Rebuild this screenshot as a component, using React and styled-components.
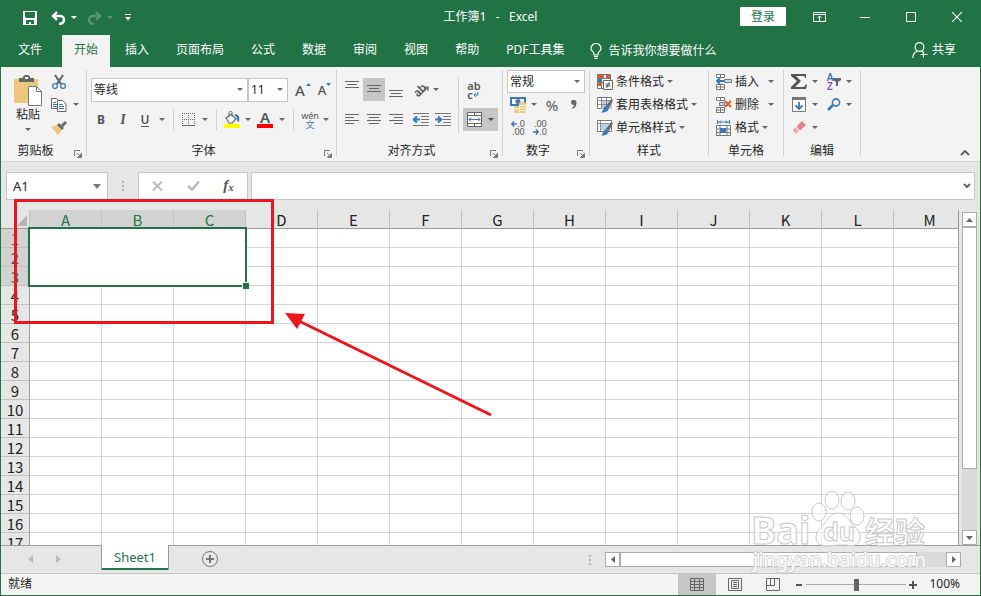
import { useState } from "react";
import styled, { createGlobalStyle, css } from "styled-components";

const columns = ["A", "B", "C", "D", "E", "F", "G", "H", "I", "J", "K", "L", "M"];
const rows = Array.from({ length: 17 }, (_, i) => i + 1);
const tabs = ["文件", "开始", "插入", "页面布局", "公式", "数据", "审阅", "视图", "帮助", "PDF工具集"];

const Caret = ({ color = "#666" }) => (
    <svg width="6" height="3" viewBox="0 0 6 3" fill={color}>
        <path d="M0 0h6L3 3z" />
    </svg>
);

const Tool = ({ label, w, h, active, children }) => (
    <ToolButton type="button" aria-label={label} $w={w} $h={h} $active={active}>
        {children}
    </ToolButton>
);

const Drop = ({ label, w = 12 }) => (
    <Tool label={`${label}选项`} w={w}>
        <Caret />
    </Tool>
);

const Combo = ({ label, value, width, height }) => (
    <ComboBox $w={width} $h={height}>
        <select aria-label={label} defaultValue={value}>
            <option>{value}</option>
        </select>
        <Caret />
    </ComboBox>
);

const Lines = ({ top, xs }) => (
    <svg width="14" height="17" viewBox="0 0 14 17" stroke="#666" shapeRendering="crispEdges">
        {xs.map(([a, b], i) => (
            <path key={i} d={`M${a} ${top + i * 3 + 0.5}H${b}`} />
        ))}
    </svg>
);

const Indent = ({ right }) => (
    <svg width="16" height="14" viewBox="0 0 16 14">
        <path d="M0 .5h16M8 3.5h8M8 6.5h8M8 9.5h8M0 12.5h16" stroke="#777" />
        <path
            d={right ? "M0 6.5h6M3 3.5l3.5 3L3 9.5" : "M7 6.5H1M4 3.5l-3.5 3L4 9.5"}
            stroke="#3b78b8"
            strokeWidth="2"
            fill="none"
        />
    </svg>
);

const GroupFooter = ({ title, launcher }) => (
    <Footer>
        <span>{title}</span>
        {launcher && (
            <button type="button" aria-label={`${title}设置`}>
                <svg width="8" height="8" viewBox="0 0 8 8" fill="none" stroke="#777">
                    <path d="M.5 6V.5H6M3 3l4 4" />
                    <path d="M7.5 3.5v4h-4z" fill="#777" />
                </svg>
            </button>
        )}
    </Footer>
);

const TitleBar = () => (
    <Title>
        <QuickAccess>
            <BarButton type="button" aria-label="保存" $w={22}>
                <svg width="14" height="14" viewBox="0 0 14 14">
                    <path
                        fill="#fff"
                        fillRule="evenodd"
                        d="M0 0h14v14H0zM2 1v5l1 1h8l1-1V1zM3 9v4h3v-2h2v2h3V9z"
                    />
                </svg>
            </BarButton>
            <BarButton type="button" aria-label="撤消" $w={35}>
                <svg width="15" height="14" viewBox="0 0 15 14" fill="none" stroke="#fff" strokeWidth="2.4">
                    <path d="M6 1L2 5l4 4M2 5h7c5 0 6 7-1 8" />
                </svg>
                <Caret color="#fff" />
            </BarButton>
            <BarButton type="button" aria-label="恢复" disabled $w={35}>
                <svg width="15" height="14" viewBox="0 0 15 14" fill="none" stroke="#569474" strokeWidth="2.4">
                    <path d="M9 1l4 4-4 4M13 5H6C1 5 0 12 7 13" />
                </svg>
                <Caret color="#569474" />
            </BarButton>
            <BarButton type="button" aria-label="自定义快速访问工具栏" $w={20}>
                <svg width="6" height="7" viewBox="0 0 6 7" fill="#fff">
                    <path d="M0 0h6v1H0zM0 3h6L3 6.5z" />
                </svg>
            </BarButton>
        </QuickAccess>
        <h1>工作簿1&nbsp;&nbsp; -&nbsp;&nbsp; Excel</h1>
        <WindowTools>
            <Login type="button">登录</Login>
            <BarButton type="button" aria-label="功能区显示选项" $w={46}>
                <svg width="13" height="10" viewBox="0 0 13 10" fill="none" stroke="#fff">
                    <path d="M.5.5h12v9H.5zM.5 2.5h12M6.5 9V4M4.5 6l2-2 2 2" />
                </svg>
            </BarButton>
            <BarButton type="button" aria-label="最小化" $w={46}>
                <svg width="10" height="10" viewBox="0 0 10 10" stroke="#fff">
                    <path d="M0 5.5h10" />
                </svg>
            </BarButton>
            <BarButton type="button" aria-label="最大化" $w={46}>
                <svg width="10" height="10" viewBox="0 0 10 10" fill="none" stroke="#fff">
                    <path d="M.5.5h9v9h-9z" />
                </svg>
            </BarButton>
            <BarButton type="button" aria-label="关闭" $w={46}>
                <svg width="10" height="10" viewBox="0 0 10 10" stroke="#fff" strokeWidth="1.2">
                    <path d="M0 0l10 10M10 0L0 10" />
                </svg>
            </BarButton>
        </WindowTools>
    </Title>
);

const TabBar = () => {
    const [active, setActive] = useState("开始");

    return (
        <Tabs>
            {tabs.map((tab, i) => (
                <Tab
                    key={tab}
                    type="button"
                    $wide={i === 0}
                    $active={active === tab}
                    onClick={() => setActive(tab)}
                >
                    {tab}
                </Tab>
            ))}
            <Search type="button">
                <svg width="12" height="16" viewBox="0 0 12 16" fill="none" stroke="#fff" strokeWidth="1.2">
                    <path d="M4 12v-1.5C3.5 8.500 1 8 1 5.5a5 5 0 0 1 10 0C11 8 8.500 8.500 8 10.5V12zM4 13.5h4M4.5 15.4h3" />
                </svg>
                告诉我你想要做什么
            </Search>
            <Share type="button">
                <svg width="16" height="16" viewBox="0 0 16 16" fill="none" stroke="#fff" strokeWidth="1.2">
                    <circle cx="7.5" cy="5" r="4.4" />
                    <path d="M.8 16c0-4 2-6 4.700-7M9.500 9l1.500 1M11.5 9.500v6M8.5 12.5h7" />
                </svg>
                共享
            </Share>
        </Tabs>
    );
};

const ClipboardGroup = () => (
    <Group $w={86}>
        <Content $pad="0 0 0 8px">
            <Paste type="button">
                <svg width="28" height="31" viewBox="0 0 28 31">
                    <path d="M0 4h24v24H0z" fill="#edc77e" />
                    <path d="M5 3h4V1.500L11 0h3l2 1.500V3h4v4H5z" fill="#666" />
                    <path d="M11 2h3v2h-3z" fill="#f3f3f3" />
                    <path d="M14.5 11.5h8l5 5v14h-13z" fill="#fff" stroke="#777" />
                    <path d="M22.5 11.5v5h5" fill="none" stroke="#777" />
                </svg>
                粘贴
                <Caret />
            </Paste>
            <Stack>
                <Line>
                    <Tool label="剪切" w={24}>
                        <svg width="14" height="16" viewBox="0 0 14 16" fill="none">
                            <path d="M3 1l6 9M11 1L5 10" stroke="#666" strokeWidth="2.2" />
                            <circle cx="3" cy="12" r="2.4" stroke="#3b78b8" strokeWidth="1.3" />
                            <circle cx="11" cy="12" r="2.4" stroke="#3b78b8" strokeWidth="1.3" />
                        </svg>
                    </Tool>
                </Line>
                <Line>
                    <Tool label="复制" w={24}>
                        <svg width="16" height="14" viewBox="0 0 16 14" fill="#fff" stroke="#666">
                            <path d="M.5.5h5l3 3v7h-8z" />
                            <path d="M2 4.5h3M2 6.5h4M2 8.5h4" stroke="#3b78b8" />
                            <path d="M6.5 2.5h5l3.500 3.500v7.5H6.500z" />
                            <path d="M8 6.5h4M8 8.5h5M8 10.5h5" stroke="#3b78b8" />
                        </svg>
                    </Tool>
                    <Drop label="复制" w={10} />
                </Line>
                <Line>
                    <Tool label="格式刷" w={24}>
                        <svg width="16" height="14" viewBox="0 0 16 14">
                            <path d="M0 6l6-2 5 5-4 5z" fill="#edc77e" />
                            <path d="M6 4l2-2 5 5-2 2z" fill="#666" />
                            <path d="M10 4l4-4 2 2-4 4z" fill="#666" />
                        </svg>
                    </Tool>
                </Line>
            </Stack>
        </Content>
        <GroupFooter title="剪贴板" launcher />
    </Group>
);

const FontGroup = () => (
    <Group $w={250}>
        <Content $pad="8px 0 0 3px">
            <Stack $gap={7}>
                <Line $pad={1}>
                    <Combo label="字体" value="等线" width={157} height={24} />
                    <Combo label="字号" value="11" width={40} height={24} />
                    <Tool label="增大字号" w={24}>
                        <Letter $size={15}>A</Letter>
                        <Corner width="5" height="3" viewBox="0 0 5 3">
                            <path d="M0 3h5L2.500 0z" />
                        </Corner>
                    </Tool>
                    <Tool label="减小字号" w={20}>
                        <Letter $size={13}>A</Letter>
                        <Corner width="5" height="3" viewBox="0 0 5 3">
                            <path d="M0 0h5L2.500 3z" />
                        </Corner>
                    </Tool>
                </Line>
                <Line>
                    <Tool label="加粗"><b>B</b></Tool>
                    <Tool label="倾斜"><Italic>I</Italic></Tool>
                    <Tool label="下划线"><Underline>U</Underline></Tool>
                    <Drop label="下划线" />
                    <Rule />
                    <Tool label="边框" w={20}>
                        <svg width="14" height="14" viewBox="0 0 14 14" stroke="#666">
                            <path
                                d="M0 .5h13M0 6.5h13M.5 0v12M6.5 0v12M12.5 0v12"
                                strokeDasharray="1 1"
                                shapeRendering="crispEdges"
                            />
                            <path d="M0 12.5h13" />
                        </svg>
                    </Tool>
                    <Drop label="边框" />
                    <Rule />
                    <Tool label="填充颜色" w={20}>
                        <svg width="16" height="17" viewBox="0 0 16 17">
                            <path d="M2 7l5-4 5 5-4 4H5z" fill="#fff" stroke="#666" strokeWidth="1.2" />
                            <path d="M5 6V1.500C5 0 8 0 8 1.500V6" fill="none" stroke="#666" />
                            <path d="M10 3c5 0 6 3 5 8l-2-1c0-2 0-3-1-4z" fill="#3b78b8" />
                            <path d="M0 13h16v4H0z" fill="#ff0" />
                        </svg>
                    </Tool>
                    <Drop label="填充颜色" />
                    <Tool label="字体颜色">
                        <FontColor>A</FontColor>
                    </Tool>
                    <Drop label="字体颜色" />
                    <Rule />
                    <Tool label="拼音">
                        <Pinyin>
                            wén<span>文</span>
                        </Pinyin>
                    </Tool>
                    <Drop label="拼音" w={10} />
                </Line>
            </Stack>
        </Content>
        <GroupFooter title="字体" launcher />
    </Group>
);

const AlignGroup = () => (
    <Group $w={166}>
        <Content $pad="8px 0 0 4px">
            <Stack $gap={7}>
                <Line $gap={3}>
                    <Line>
                        <Tool label="顶端对齐"><Lines top={0} xs={[[0, 14], [2, 12], [0, 14]]} /></Tool>
                        <Tool label="垂直居中" h={23} active><Lines top={4} xs={[[0, 14], [2, 12], [0, 14]]} /></Tool>
                        <Tool label="底端对齐"><Lines top={9} xs={[[0, 14], [2, 12], [0, 14]]} /></Tool>
                    </Line>
                    <Line>
                        <Tool label="方向">
                            <Slanted>ab</Slanted>
                            <svg width="10" height="14" viewBox="0 0 10 14" stroke="#666" strokeWidth="1.2" fill="none">
                                <path d="M0 13l9-9M5 4h4v4" />
                            </svg>
                        </Tool>
                        <Drop label="方向" w={8} />
                    </Line>
                </Line>
                <Line $gap={3}>
                    <Line>
                        <Tool label="左对齐"><Lines top={3} xs={[[0, 14], [0, 9], [0, 14], [0, 9]]} /></Tool>
                        <Tool label="居中"><Lines top={3} xs={[[0, 14], [2, 12], [0, 14], [2, 12]]} /></Tool>
                        <Tool label="右对齐"><Lines top={3} xs={[[0, 14], [5, 14], [0, 14], [5, 14]]} /></Tool>
                    </Line>
                    <Line>
                        <Tool label="减少缩进量"><Indent /></Tool>
                        <Tool label="增加缩进量"><Indent right /></Tool>
                    </Line>
                </Line>
            </Stack>
            <Rule $tall />
            <Stack $gap={7}>
                <Line>
                    <Tool label="自动换行">
                        <Wrap>
                            ab
                            <span>
                                c
                                <svg width="6" height="5" viewBox="0 0 6 5" stroke="#3b78b8" fill="none">
                                    <path d="M5 0v3H1M3 1L1 3l2 2" />
                                </svg>
                            </span>
                        </Wrap>
                    </Tool>
                </Line>
                <Line>
                    <Tool label="合并后居中" w={35} h={23} active>
                        <svg width="15" height="15" viewBox="0 0 15 15">
                            <path d="M.5.5h14v14H.5zM.5 3.5h14M.5 11.5h14M7.5 0v3M7.5 12v3" fill="#fff" stroke="#666" />
                            <path d="M2 7.5h11M4 5.5l-2 2 2 2M11 5.5l2 2-2 2" fill="none" stroke="#3b78b8" />
                        </svg>
                        <Caret color="#444" />
                    </Tool>
                </Line>
            </Stack>
        </Content>
        <GroupFooter title="对齐方式" launcher />
    </Group>
);

const NumberGroup = () => (
    <Group $w={87}>
        <Content $pad="0 0 0 4px">
            <Stack>
                <Line>
                    <Combo label="数字格式" value="常规" width={78} height={23} />
                </Line>
                <Line>
                    <Tool label="会计数字格式">
                        <svg width="17" height="16" viewBox="0 0 17 16">
                            <path d="M0 0h16v9H0z" fill="#3b78b8" />
                            <path d="M2 2h12v5H2z" fill="#fff" />
                            <circle cx="8" cy="4.5" r="2.5" fill="#3b78b8" />
                            <rect x="9" y="5" width="7" height="11" rx="2" fill="#edc77e" />
                            <rect x="4" y="9" width="6" height="7" rx="2" fill="#edc77e" />
                            <path d="M9 8.500h7M9 11h7M9 13.500h7M4 12h5M9.500 9v6" stroke="#fff" strokeWidth=".8" />
                        </svg>
                    </Tool>
                    <Drop label="会计数字格式" w={10} />
                    <Tool label="百分比" w={26}><Percent>%</Percent></Tool>
                    <Tool label="千位分隔样式" w={18}>
                        <svg width="6" height="9" viewBox="0 0 6 9" fill="#666">
                            <path d="M0 2.500a2.500 2.500 0 0 1 5.500 0C5.500 6 4 8 1.500 9l-.5-1c1.500-1 2-2 2-3C1 5 0 4 0 2.500z" />
                        </svg>
                    </Tool>
                </Line>
                <Line>
                    <Tool label="增加小数位数">
                        <Decimals>
                            <span>
                                <svg width="6" height="6" viewBox="0 0 6 6" stroke="#3b78b8" strokeWidth="1.5" fill="none">
                                    <path d="M6 3H1M3 .5L.8 3 3 5.500" />
                                </svg>
                                .0
                            </span>
                            <span>.00</span>
                        </Decimals>
                    </Tool>
                    <Tool label="减少小数位数">
                        <Decimals>
                            <span>.00</span>
                            <span>
                                <svg width="6" height="6" viewBox="0 0 6 6" stroke="#3b78b8" strokeWidth="1.5" fill="none">
                                    <path d="M0 3h5M3 .5L5.200 3 3 5.500" />
                                </svg>
                                .0
                            </span>
                        </Decimals>
                    </Tool>
                </Line>
            </Stack>
        </Content>
        <GroupFooter title="数字" launcher />
    </Group>
);

const TableBrush = ({ cell }) => (
    <svg width="16" height="16" viewBox="0 0 16 16">
        <path d="M.5.5h14v11H.5z" fill="#fff" stroke="#777" />
        <path d={cell ? "M4 4h8v6H4z" : "M4 4h11v8H4z"} fill="#b7cfe8" />
        {cell ? (
            <path d="M.5 3.5h14M3.5.5v11" stroke="#777" fill="none" strokeWidth=".8" />
        ) : (
            <path d="M.5 3.5h14M4.5.5v11M.5 7.5h14M9.5.5v11" stroke="#777" fill="none" strokeWidth=".8" />
        )}
        <path d="M14.500 2L16 3l-4 8-3-2z" fill="#666" />
        <path d="M8.500 9l3.500 2c-1 4-4 5-8 4.500 2-1 2-5 4.500-6.500z" fill="#3b78b8" />
    </svg>
);

const StylesGroup = () => (
    <Group $w={119}>
        <Content $pad="0 0 0 7px">
            <Stack>
                <TextTool type="button">
                    <svg width="16" height="16" viewBox="0 0 16 16">
                        <path d="M.5.5h13v14H.5zM4.5.5v14M.5 4.5h13M.5 8.5h13" fill="#fff" stroke="#777" />
                        <path d="M1 1h6v3H1zM9 1h4v3H9zM1 9h4v3H1z" fill="#dc5a32" />
                        <path d="M1 5h4v3H1z" fill="#3b78b8" />
                        <path d="M6.5 6.5h9v9h-9z" fill="#fff" stroke="#666" />
                        <path d="M8.5 10h5M8.5 12h5M12.5 8l-3 6" stroke="#555" />
                    </svg>
                    条件格式
                    <Caret />
                </TextTool>
                <TextTool type="button">
                    <TableBrush />
                    套用表格格式
                    <Caret />
                </TextTool>
                <TextTool type="button">
                    <TableBrush cell />
                    单元格样式
                    <Caret />
                </TextTool>
            </Stack>
        </Content>
        <GroupFooter title="样式" />
    </Group>
);

const CellsGroup = () => (
    <Group $w={75}>
        <Content $pad="0 0 0 7px">
            <Stack>
                <Line>
                    <TextTool type="button">
                        <svg width="16" height="16" viewBox="0 0 16 16" fill="#fff" stroke="#777">
                            <path d="M.5.5h8v3h-8zM4.5.5v3M.5 10.5h8v5h-8zM.5 13h8M4.5 10.5v5" />
                            <path d="M8.5 5.5h7v3h-7z" fill="#c5d9ee" />
                            <path d="M8 7H1M4 4L1 7l3 3" stroke="#3b78b8" strokeWidth="2" fill="none" />
                        </svg>
                        插入
                    </TextTool>
                    <Drop label="插入" w={24} />
                </Line>
                <Line>
                    <TextTool type="button">
                        <svg width="16" height="16" viewBox="0 0 16 16" fill="#fff" stroke="#777">
                            <path d="M.5.5h8v3h-8zM4.5.5v3M.5 10.5h8v5h-8zM.5 13h8M4.5 10.5v5" />
                            <path d="M3.5 5.5h5v3h-5z" fill="#c5d9ee" />
                            <path d="M9 4l6 6M15 4l-6 6" stroke="#dc5a32" strokeWidth="2" />
                        </svg>
                        删除
                    </TextTool>
                    <Drop label="删除" w={24} />
                </Line>
                <TextTool type="button">
                    <svg width="16" height="16" viewBox="0 0 16 16" fill="#fff" stroke="#777">
                        <path d="M.5 5.5h14v10H.5zM4 5.5v10M11 5.5v10M.5 9h14M.5 12.5h14" />
                        <path d="M4 8h6v5H4z" fill="#3b78b8" stroke="none" />
                        <path d="M2 2h11M1.5 0v4M13.5 0v4M5 .5L3.500 2 5 3.500M10 .5L11.500 2 10 3.500" stroke="#3b78b8" fill="none" />
                    </svg>
                    格式
                    <Caret />
                </TextTool>
            </Stack>
        </Content>
        <GroupFooter title="单元格" />
    </Group>
);

const EditGroup = () => (
    <Group $w={77}>
        <Content $pad="0 0 0 4px">
            <Stack>
                <Line $gap={4}>
                    <Line>
                        <Tool label="自动求和">
                            <svg width="16" height="15" viewBox="0 0 16 15" fill="#555">
                                <path d="M0 0h15v4h-1c0-1.500-1-2-2-2H5l5 5-6 6h8c1.500 0 2-1 2.500-2.500H16L15 15H0v-2l6-6-6-5z" />
                            </svg>
                        </Tool>
                        <Drop label="自动求和" w={9} />
                    </Line>
                    <Line>
                        <Tool label="排序和筛选">
                            <SortMark>
                                A<span>Z</span>
                            </SortMark>
                            <svg width="8" height="8" viewBox="0 0 8 8" fill="#666">
                                <path d="M0 0h8v2L5 4v4H3V4L0 2z" />
                            </svg>
                        </Tool>
                        <Drop label="排序和筛选" w={8} />
                    </Line>
                </Line>
                <Line $gap={4}>
                    <Line>
                        <Tool label="填充">
                            <svg width="14" height="15" viewBox="0 0 14 15">
                                <path d="M.5.5h13v14H.5z" fill="#fff" stroke="#777" />
                                <path d="M0 0h14v3H0z" fill="#777" />
                                <path d="M7 5v7M3.500 8.500L7 12l3.500-3.500" stroke="#3b78b8" strokeWidth="1.8" fill="none" />
                            </svg>
                        </Tool>
                        <Drop label="填充" w={9} />
                    </Line>
                    <Line>
                        <Tool label="查找和选择">
                            <svg width="14" height="13" viewBox="0 0 14 13" fill="none" stroke="#3b78b8">
                                <circle cx="9" cy="4.5" r="3.6" strokeWidth="1.6" />
                                <path d="M6 7l-5 5" strokeWidth="2.6" />
                            </svg>
                        </Tool>
                        <Drop label="查找和选择" w={8} />
                    </Line>
                </Line>
                <Line>
                    <Tool label="清除">
                        <svg width="13" height="13" viewBox="0 0 13 13">
                            <path d="M0 9l2.500-3L6 10l-2.500 2.500H2z" fill="#f2a9b5" />
                            <path d="M3.500 5.500L9 0l4 4-6 5.500z" fill="#e57f92" />
                        </svg>
                    </Tool>
                    <Drop label="清除" w={9} />
                </Line>
            </Stack>
        </Content>
        <GroupFooter title="编辑" />
    </Group>
);

const FormulaRow = () => (
    <FormulaBar>
        <NameBox>
            <input aria-label="名称框" defaultValue="A1" />
            <svg width="8" height="5" viewBox="0 0 8 5" fill="#777">
                <path d="M0 0h8L4 5z" />
            </svg>
        </NameBox>
        <Dots width="2" height="12" viewBox="0 0 2 12">
            <path d="M0 1h2v2H0zM0 5h2v2H0zM0 9h2v2H0z" />
        </Dots>
        <FormulaTools>
            <Tool label="取消" w={36}>
                <svg width="11" height="10" viewBox="0 0 11 10" stroke="#bbb" strokeWidth="2">
                    <path d="M1 .5l9 9M10 .5l-9 9" />
                </svg>
            </Tool>
            <Tool label="输入" w={36}>
                <svg width="13" height="10" viewBox="0 0 13 10" fill="none" stroke="#bbb" strokeWidth="2.6">
                    <path d="M1 5l4 3.500 7-8" />
                </svg>
            </Tool>
            <Tool label="插入函数" w={35}>
                <Fx>
                    f<sub>x</sub>
                </Fx>
            </Tool>
        </FormulaTools>
        <FormulaInput>
            <input aria-label="编辑栏" />
            <svg width="8" height="6" viewBox="0 0 8 6" fill="none" stroke="#666" strokeWidth="2">
                <path d="M1 1l3 3 3-3" />
            </svg>
        </FormulaInput>
    </FormulaBar>
);

const Sheet = () => (
    <SheetArea>
        <GridPane>
            <Grid>
                <colgroup>
                    <col width="29" />
                    {columns.map((c) => (
                        <col key={c} width="72" />
                    ))}
                </colgroup>
                <thead>
                    <tr>
                        <Head>
                            <svg width="10" height="11" viewBox="0 0 10 11" fill="#b4b4b4">
                                <path d="M10 0v11H0z" />
                            </svg>
                        </Head>
                        {columns.map((c, i) => (
                            <Head key={c} scope="col" $selected={i < 3}>
                                {c}
                            </Head>
                        ))}
                    </tr>
                </thead>
                <tbody>
                    {rows.map((r) => (
                        <tr key={r}>
                            <RowHead scope="row" $selected={r < 4}>
                                {r}
                            </RowHead>
                            {columns.map((c) => (
                                <td key={c} />
                            ))}
                        </tr>
                    ))}
                </tbody>
            </Grid>
            <Selection />
        </GridPane>
        <VerticalScroll>
            <ScrollButton type="button" aria-label="向上滚动">
                <svg width="7" height="4" viewBox="0 0 7 4" fill="#666">
                    <path d="M0 4h7L3.500 0z" />
                </svg>
            </ScrollButton>
            <ScrollTrack>
                <span />
            </ScrollTrack>
            <ScrollButton type="button" aria-label="向下滚动">
                <svg width="7" height="4" viewBox="0 0 7 4" fill="#666">
                    <path d="M0 0h7L3.500 4z" />
                </svg>
            </ScrollButton>
        </VerticalScroll>
    </SheetArea>
);

const SheetTabs = () => (
    <SheetBar>
        <SheetNav>
            <button type="button" aria-label="上一个工作表" disabled>
                <svg width="5" height="8" viewBox="0 0 5 8" fill="#bbb">
                    <path d="M5 0v8L0 4z" />
                </svg>
            </button>
            <button type="button" aria-label="下一个工作表" disabled>
                <svg width="5" height="8" viewBox="0 0 5 8" fill="#bbb">
                    <path d="M0 0v8l5-4z" />
                </svg>
            </button>
        </SheetNav>
        <SheetTab type="button">Sheet1</SheetTab>
        <AddSheet type="button" aria-label="新工作表">
            <svg width="16" height="16" viewBox="0 0 16 16" fill="none" stroke="#777">
                <circle cx="8" cy="8" r="7.5" />
                <path d="M8 4v8M4 8h8" strokeWidth="2" />
            </svg>
        </AddSheet>
        <HorizontalScroll>
            <Dots width="2" height="12" viewBox="0 0 2 12">
                <path d="M0 1h2v2H0zM0 5h2v2H0zM0 9h2v2H0z" />
            </Dots>
            <ScrollButton type="button" aria-label="向左滚动">
                <svg width="4" height="7" viewBox="0 0 4 7" fill="#666">
                    <path d="M4 0v7L0 3.500z" />
                </svg>
            </ScrollButton>
            <ScrollTrack $horizontal>
                <span />
            </ScrollTrack>
            <ScrollButton type="button" aria-label="向右滚动">
                <svg width="4" height="7" viewBox="0 0 4 7" fill="#666">
                    <path d="M0 0v7l4-3.500z" />
                </svg>
            </ScrollButton>
        </HorizontalScroll>
    </SheetBar>
);

const StatusRow = () => {
    const [zoom, setZoom] = useState(100);

    return (
        <StatusBar>
            <span>就绪</span>
            <StatusTools>
                <ViewButton type="button" aria-label="普通" $active>
                    <svg width="14" height="13" viewBox="0 0 14 13" fill="none" stroke="#666">
                        <path d="M.5.5h13v12H.5zM.5 3.5h13M.5 6.5h13M.5 9.5h13M4.5.5v12M9.5.5v12" />
                    </svg>
                </ViewButton>
                <ViewButton type="button" aria-label="页面布局">
                    <svg width="14" height="13" viewBox="0 0 14 13" fill="none" stroke="#666">
                        <path d="M.5.5h13v12H.5zM3.5 2.5h7v8h-7zM5 4.5h4M5 6.5h4M5 8.5h4" />
                    </svg>
                </ViewButton>
                <ViewButton type="button" aria-label="分页预览">
                    <svg width="14" height="13" viewBox="0 0 14 13" fill="none" stroke="#666">
                        <path d="M.5.5h13v12H.5zM4.5.5v7M8.5.5v7M.5 7.5h8" />
                    </svg>
                </ViewButton>
                <ZoomButton type="button" aria-label="缩小" onClick={() => setZoom(Math.max(10, zoom - 10))}>
                    <svg width="6" height="6" viewBox="0 0 6 6" stroke="#555" strokeWidth="2">
                        <path d="M0 3h6" />
                    </svg>
                </ZoomButton>
                <ZoomRange
                    type="range"
                    aria-label="显示比例"
                    min="10"
                    max="190"
                    value={zoom}
                    onChange={(e) => setZoom(Number(e.target.value))}
                />
                <ZoomButton type="button" aria-label="放大" onClick={() => setZoom(Math.min(190, zoom + 10))}>
                    <svg width="8" height="8" viewBox="0 0 8 8" stroke="#555" strokeWidth="2">
                        <path d="M0 4h8M4 0v8" />
                    </svg>
                </ZoomButton>
                <ZoomValue>{zoom}%</ZoomValue>
            </StatusTools>
        </StatusBar>
    );
};

const Watermark = () => (
    <Mark width="180" height="86" viewBox="0 0 180 86">
        <text x="0" y="54" fontSize="38" fontWeight="700">Bai</text>
        <g>
            <ellipse cx="81" cy="10" rx="7" ry="9" />
            <ellipse cx="97" cy="11" rx="7" ry="9" />
            <ellipse cx="68" cy="22" rx="7" ry="9" />
            <ellipse cx="106" cy="26" rx="7" ry="9" />
            <path d="M87 23c7 0 10 6 14 11 4 4 9 8 8 14-1 9-9 8-14 7-5 0-11 0-16 1-6 0-14 0-14-9 0-6 5-9 8-13 4-5 7-11 14-11z" />
        </g>
        <text x="72" y="51" fontSize="25" fontWeight="700">du</text>
        <text x="114" y="53" fontSize="30" fontWeight="700">经验</text>
        <Address x="2" y="77" fontSize="20">jingyan.baidu.com</Address>
    </Mark>
);

const App = () => (
    <>
        <GlobalStyle />
        <Window>
            <TitleBar />
            <TabBar />
            <Ribbon>
                <ClipboardGroup />
                <FontGroup />
                <AlignGroup />
                <NumberGroup />
                <StylesGroup />
                <CellsGroup />
                <EditGroup />
                <Collapse type="button" aria-label="折叠功能区">
                    <svg width="10" height="6" viewBox="0 0 10 6" fill="none" stroke="#666" strokeWidth="2">
                        <path d="M1 5l4-4 4 4" />
                    </svg>
                </Collapse>
            </Ribbon>
            <FormulaRow />
            <Sheet />
            <SheetTabs />
            <StatusRow />
            <Annotation width="480" height="220" viewBox="0 0 480 220">
                <path d="M1.500 1.500h257v122h-257z" fill="none" />
                <path d="M285 122l192 94" />
                <path d="M271 114l20 1-8 15z" fill="#ee141c" stroke="none" />
            </Annotation>
            <Watermark />
        </Window>
    </>
);

export default App;

const GlobalStyle = createGlobalStyle`
    * {
        box-sizing: border-box;
    }

    body {
        margin: 0;
        font: 12px/16px "Noto Sans", "Noto Sans CJK SC", sans-serif;
        color: #262626;
    }

    button,
    input,
    select {
        margin: 0;
        padding: 0;
        border: 0;
        border-radius: 0;
        background: none;
        font: inherit;
        color: inherit;
        outline: none;
    }

    svg {
        display: block;
        flex: none;
    }
`;

const center = css`
    display: flex;
    align-items: center;
    justify-content: center;
`;

const Window = styled.div`
    position: relative;
    display: flex;
    flex-direction: column;
    height: 100vh;
    overflow: hidden;
    border: solid #217346;
    border-width: 0 1px 1px;
    background: #e6e6e6;
`;

const Title = styled.header`
    display: grid;
    grid-template-columns: 1fr auto 1fr;
    height: 35px;
    background: #217346;
    color: #fff;

    h1 {
        margin: 0;
        font-size: 12px;
        font-weight: 400;
        line-height: 33px;
    }
`;

const QuickAccess = styled.div`
    display: flex;
    align-items: center;
    gap: 1px;
    padding-left: 18px;
`;

const WindowTools = styled.div`
    display: flex;
    align-items: center;
    justify-content: flex-end;
    height: 33px;
`;

const BarButton = styled.button`
    ${center}
    gap: 5px;
    width: ${({ $w }) => $w}px;
    height: 32px;

    ${QuickAccess} &:nth-child(2) {
        margin-left: 4px;
    }
`;

const Login = styled.button`
    width: 46px;
    height: 19px;
    margin-right: 10px;
    border-radius: 1px;
    background: #fff;
    color: #217346;
`;

const Tabs = styled.nav`
    display: flex;
    gap: 3px;
    height: 32px;
    background: #217346;
`;

const Tab = styled.button`
    ${center}
    gap: 6px;
    padding: 0 ${({ $wide }) => ($wide ? 17 : 12)}px 2px;
    background: ${({ $active }) => ($active ? "#f3f3f3" : "transparent")};
    color: ${({ $active }) => ($active ? "#217346" : "#fff")};
    white-space: nowrap;
`;

const Search = styled(Tab)`
    padding: 0 11px;
`;

const Share = styled.button`
    ${center}
    gap: 4px;
    margin-left: auto;
    padding: 0 24px 3px 0;
    color: #fff;
`;

const Ribbon = styled.section`
    display: flex;
    height: 95px;
    border-bottom: 1px solid #d2d2d2;
    background: #f3f3f3;
`;

const Group = styled.div`
    display: flex;
    flex-direction: column;
    flex: none;
    width: ${({ $w }) => $w}px;
    margin: 3px 0 5px;
    border-right: 1px solid #d2d2d2;
`;

const Content = styled.div`
    display: flex;
    height: 69px;
    padding: ${({ $pad }) => $pad};
`;

const Stack = styled.div`
    display: flex;
    flex-direction: column;
    align-items: flex-start;
    gap: ${({ $gap }) => $gap || 0}px;
`;

const Line = styled.div`
    display: flex;
    align-items: center;
    height: 23px;
    gap: ${({ $gap }) => $gap || 0}px;
    padding-left: ${({ $pad }) => $pad || 0}px;
`;

const Rule = styled.span`
    width: 1px;
    height: ${({ $tall }) => ($tall ? 55 : 21)}px;
    margin: 0 ${({ $tall }) => ($tall ? 4 : 5)}px;
    background: #d2d2d2;
`;

const Footer = styled.div`
    display: flex;
    height: 17px;
    line-height: 24px;

    span {
        flex: 1;
        text-align: center;
    }

    button {
        ${center}
        width: 16px;
        height: 22px;
        padding-top: 7px;
    }
`;

const ToolButton = styled.button`
    ${center}
    position: relative;
    flex: none;
    width: ${({ $w }) => $w || 22}px;
    height: ${({ $h }) => $h || 22}px;
    gap: ${({ $active }) => ($active ? 6 : 0)}px;
    background: ${({ $active }) => ($active ? "#c6c6c6" : "transparent")};
    color: #555;
`;

const TextTool = styled.button`
    display: flex;
    align-items: center;
    gap: 3px;
    height: 23px;
    white-space: nowrap;
`;

const Paste = styled.button`
    display: flex;
    flex-direction: column;
    align-items: center;
    width: 38px;
    padding-top: 5px;
    line-height: 18px;

    svg:last-child {
        margin-top: 4px;
    }
`;

const ComboBox = styled.div`
    display: flex;
    align-items: center;
    width: ${({ $w }) => $w}px;
    height: ${({ $h }) => $h}px;
    border: 1px solid #c6c6c6;
    background: #fff;

    select {
        flex: 1;
        min-width: 0;
        height: 100%;
        padding-left: 2px;
        appearance: none;
    }

    svg {
        margin-right: 4px;
    }
`;

const Letter = styled.span`
    font-size: ${({ $size }) => $size}px;
    font-weight: 500;
`;

const Percent = styled.span`
    font-size: 15px;
`;

const Corner = styled.svg`
    position: absolute;
    top: 4px;
    right: 1px;
    fill: #3b78b8;
`;

const Slanted = styled.span`
    margin-right: -7px;
    font-size: 11px;
    font-weight: 600;
    rotate: -45deg;
`;

const Italic = styled.i`
    font-family: "Liberation Serif", serif;
    font-size: 14px;
    font-weight: 700;
`;

const Underline = styled.span`
    border-bottom: 1px solid #555;
    font-weight: 600;
    line-height: 13px;
`;

const FontColor = styled.span`
    width: 16px;
    border-bottom: 4px solid #f00;
    font-size: 15px;
    font-weight: 600;
    line-height: 13px;
`;

const Pinyin = styled.span`
    font-size: 9px;
    line-height: 9px;

    span {
        display: block;
        color: #3b78b8;
    }
`;

const Wrap = styled.span`
    font-size: 11px;
    font-weight: 600;
    line-height: 9px;

    span {
        display: flex;
        align-items: center;
    }
`;

const Decimals = styled.span`
    display: flex;
    flex-direction: column;
    align-items: flex-end;
    font-size: 9px;
    line-height: 8px;

    span {
        display: flex;
        align-items: center;
    }
`;

const SortMark = styled.span`
    color: #3b78b8;
    font-size: 10px;
    font-weight: 600;
    line-height: 9px;

    span {
        display: block;
        color: #8a4fb0;
    }
`;

const Collapse = styled.button`
    align-self: flex-end;
    margin: 0 10px 5px auto;
`;

const FormulaBar = styled.div`
    display: flex;
    align-items: center;
    height: 48px;
    padding: 0 5px;
`;

const field = css`
    display: flex;
    align-items: center;
    height: 28px;
    border: 1px solid #c6c6c6;
    background: #fff;

    input {
        flex: 1;
        min-width: 0;
        height: 100%;
        padding-left: 6px;
        font-size: 13px;
    }
`;

const NameBox = styled.div`
    ${field}
    width: 102px;

    svg {
        margin-right: 6px;
    }
`;

const Dots = styled.svg`
    margin: 0 14px;
    fill: #b4b4b4;
`;

const FormulaTools = styled.div`
    ${field}
    width: 110px;
    margin-right: 3px;
`;

const FormulaInput = styled.div`
    ${field}
    flex: 1;

    svg {
        margin-right: 3px;
    }
`;

const Fx = styled.i`
    font-family: "Liberation Serif", serif;
    font-size: 15px;
    font-weight: 700;

    sub {
        font-size: 11px;
        vertical-align: -1px;
    }
`;

const SheetArea = styled.main`
    display: flex;
    flex: 1;
    min-height: 0;
    padding-right: 3px;
`;

const GridPane = styled.div`
    position: relative;
    flex: 1;
    min-width: 0;
    overflow: hidden;
    border-right: 1px solid #9b9b9b;
`;

const Grid = styled.table`
    width: 965px;
    border-spacing: 0;
    table-layout: fixed;
    font-family: "Noto Sans CJK SC", sans-serif;
    font-size: 15px;
    line-height: 16px;
    color: #222;

    td {
        height: 19px;
        padding: 0;
        border: solid #d4d4d4;
        border-width: 0 1px 1px 0;
        background: #fff;
    }
`;

const Head = styled.th`
    height: 19px;
    padding: 2px 0 0;
    border: solid #c0c0c0;
    border-width: 0 1px 1px 0;
    border-bottom-color: #9b9b9b;
    background: ${({ $selected }) => ($selected ? "#d2d2d2" : "#e6e6e6")};
    color: ${({ $selected }) => ($selected ? "#217346" : "inherit")};
    font-weight: 400;

    svg {
        margin-left: 16px;
    }
`;

const RowHead = styled(Head)`
    border-right-color: #9b9b9b;
    border-bottom-color: #c0c0c0;
`;

/* selected range A1:C3, merged, lies over the cells */
const Selection = styled.div`
    position: absolute;
    top: 17px;
    left: 27px;
    width: 219px;
    height: 60px;
    border: 2px solid #217346;
    background: #fff;

    &::after {
        content: "";
        position: absolute;
        right: -4px;
        bottom: -4px;
        width: 6px;
        height: 6px;
        border: solid #fff;
        border-width: 1px 0 0 1px;
        background: #217346;
    }
`;

const ScrollButton = styled.button`
    ${center}
    flex: none;
    width: 15px;
    height: 15px;
    border: 1px solid #ababab;
    background: #fff;
`;

const VerticalScroll = styled.div`
    display: flex;
    flex-direction: column;
    margin-left: 3px;
    padding-top: 2px;
`;

const ScrollTrack = styled.div`
    flex: 1;
    background: #dadada;

    span {
        display: block;
        width: ${({ $horizontal }) => ($horizontal ? "91%" : "15px")};
        height: ${({ $horizontal }) => ($horizontal ? "15px" : "80%")};
        border: 1px solid #ababab;
        background: #fff;
    }
`;

const SheetBar = styled.div`
    display: flex;
    height: 28px;
    border-top: 1px solid #9b9b9b;
`;

const SheetNav = styled.div`
    display: flex;
    align-items: center;
    width: 100px;
    padding: 0 0 2px 15px;

    button {
        ${center}
        width: 28px;
        height: 20px;
    }
`;

const SheetTab = styled.button`
    height: 25px;
    margin-top: -1px;
    padding: 0 12px 2px;
    border: solid #9b9b9b;
    border-width: 0 1px;
    background: #fff;
    box-shadow: inset 0 -2px #217346;
    color: #217346;
    font-size: 13px;
`;

const AddSheet = styled.button`
    padding: 0 33px 2px;
`;

const HorizontalScroll = styled.div`
    display: flex;
    align-items: center;
    flex: 0 1 405px;
    margin-left: auto;
    padding-right: 19px;
`;

const StatusBar = styled.footer`
    display: flex;
    align-items: center;
    justify-content: space-between;
    height: 22px;
    padding-left: 7px;
    border-top: 1px solid #c6c6c6;
    background: #f3f3f3;

    > span {
        padding-bottom: 2px;
    }
`;

const StatusTools = styled.div`
    display: flex;
    align-items: center;
    padding-right: 20px;
`;

const ViewButton = styled.button`
    ${center}
    width: 38px;
    height: 21px;
    background: ${({ $active }) => ($active ? "#c6c6c6" : "transparent")};
`;

const ZoomButton = styled.button`
    ${center}
    width: 14px;
    height: 20px;
`;

const ZoomRange = styled.input`
    width: 100px;
    height: 12px;
    appearance: none;
    background: linear-gradient(#ababab, #ababab) center / 100% 1px no-repeat;

    &::-webkit-slider-thumb {
        width: 5px;
        height: 12px;
        appearance: none;
        background: #666;
    }
`;

const ZoomValue = styled.span`
    margin-left: 9px;
    padding-bottom: 2px;
`;

const Annotation = styled.svg`
    position: absolute;
    top: 199px;
    left: 13px;
    stroke: #ee141c;
    stroke-width: 3px;
    pointer-events: none;
`;

const Mark = styled.svg`
    position: absolute;
    right: 49px;
    bottom: 19px;
    fill: #fff;
    fill-opacity: 0.6;
    stroke: #c8c8c8;
    stroke-width: 1px;
    pointer-events: none;
`;

const Address = styled.text`
    fill-opacity: 0.9;
    stroke: #d4d4d4;
    stroke-width: 2px;
    paint-order: stroke;
`;
